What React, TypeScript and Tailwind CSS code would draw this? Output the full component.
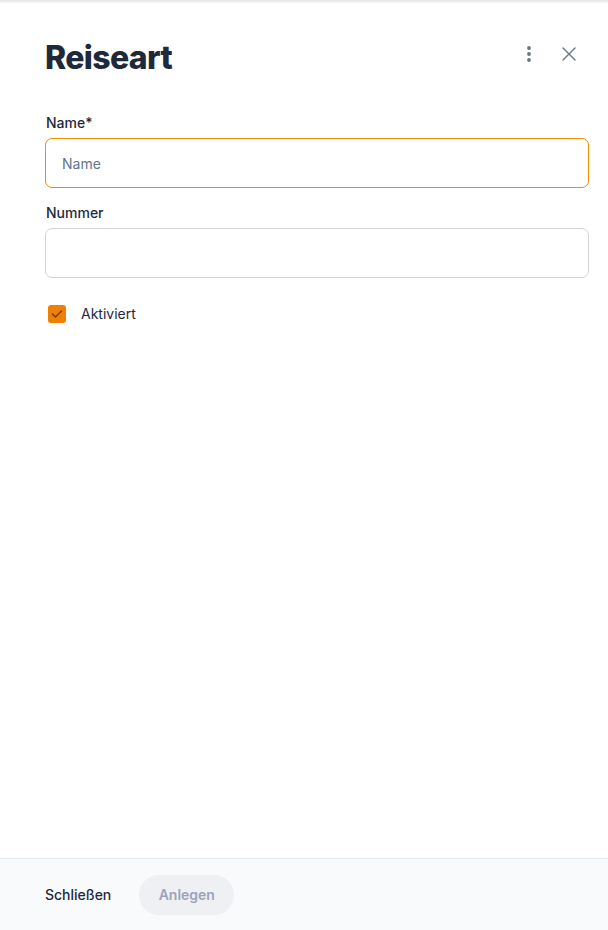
import React from "react";

export default function App() {
  return (
    <div className="w-[608px] h-[930px] bg-white flex flex-col relative overflow-hidden" style={{ fontFamily: "Inter, 'Liberation Sans', sans-serif" }}>
      <div className="h-[3px] bg-gradient-to-b from-[#e5e5e5] to-[#f7f7f7]" />
      <div className="flex-1 flex flex-col pl-[45px] pr-[19px]">
        <div className="flex items-start justify-between pt-[37px]">
          <h1 className="text-[32px] leading-[36px] font-extrabold tracking-[-0.02em] text-[#1e293b]">Reiseart</h1>
          <div className="flex items-center gap-[26px] mr-[12px] mt-[4px] text-[#64748b]">
            <svg width="12" height="20" viewBox="0 0 12 20" fill="currentColor">
              <circle cx="6" cy="4" r="1.9" />
              <circle cx="6" cy="10" r="1.9" />
              <circle cx="6" cy="16" r="1.9" />
            </svg>
            <svg width="16" height="16" viewBox="0 0 16 16" stroke="currentColor" strokeWidth="1.4" fill="none" strokeLinecap="round">
              <path d="M2 2 L14 14 M14 2 L2 14" />
            </svg>
          </div>
        </div>
        <div className="mt-[37px] flex flex-col">
          <label className="text-[14px] leading-[20px] font-medium text-[#1e293b] ml-[1px]">Name*</label>
          <div className="mt-[5px] h-[50px] rounded-[7px] border border-[#f08c00] flex items-center px-[16px]">
            <span className="text-[14px] text-[#64748b]">Name</span>
          </div>
          <label className="mt-[15px] text-[14px] leading-[20px] font-medium text-[#1e293b] ml-[1px]">Nummer</label>
          <div className="mt-[5px] h-[50px] rounded-[7px] border border-[#d1d5db]" />
          <div className="mt-[25px] flex items-center">
            <div className="ml-[3px] w-[18px] h-[18px] rounded-[3px] bg-[#f08000] flex items-center justify-center">
              <svg width="12" height="10" viewBox="0 0 12 10" fill="none" stroke="#7c3d00" strokeWidth="1.6" strokeLinecap="round" strokeLinejoin="round">
                <path d="M1.5 5 L4.5 8 L10.5 2" />
              </svg>
            </div>
            <span className="ml-[15px] text-[14px] text-[#1e293b]">Aktiviert</span>
          </div>
        </div>
      </div>
      <div className="h-[72px] border-t border-[#e2e8f0] bg-[#f8fafc] flex items-center px-[45px] gap-[28px]">
        <span className="text-[14px] font-medium text-[#1e293b]">Schließen</span>
        <div className="h-[40px] w-[95px] rounded-full bg-[#eef0f3] flex items-center justify-center text-[14px] font-semibold text-[#9ca3b8]">Anlegen</div>
      </div>
    </div>
  );
}
